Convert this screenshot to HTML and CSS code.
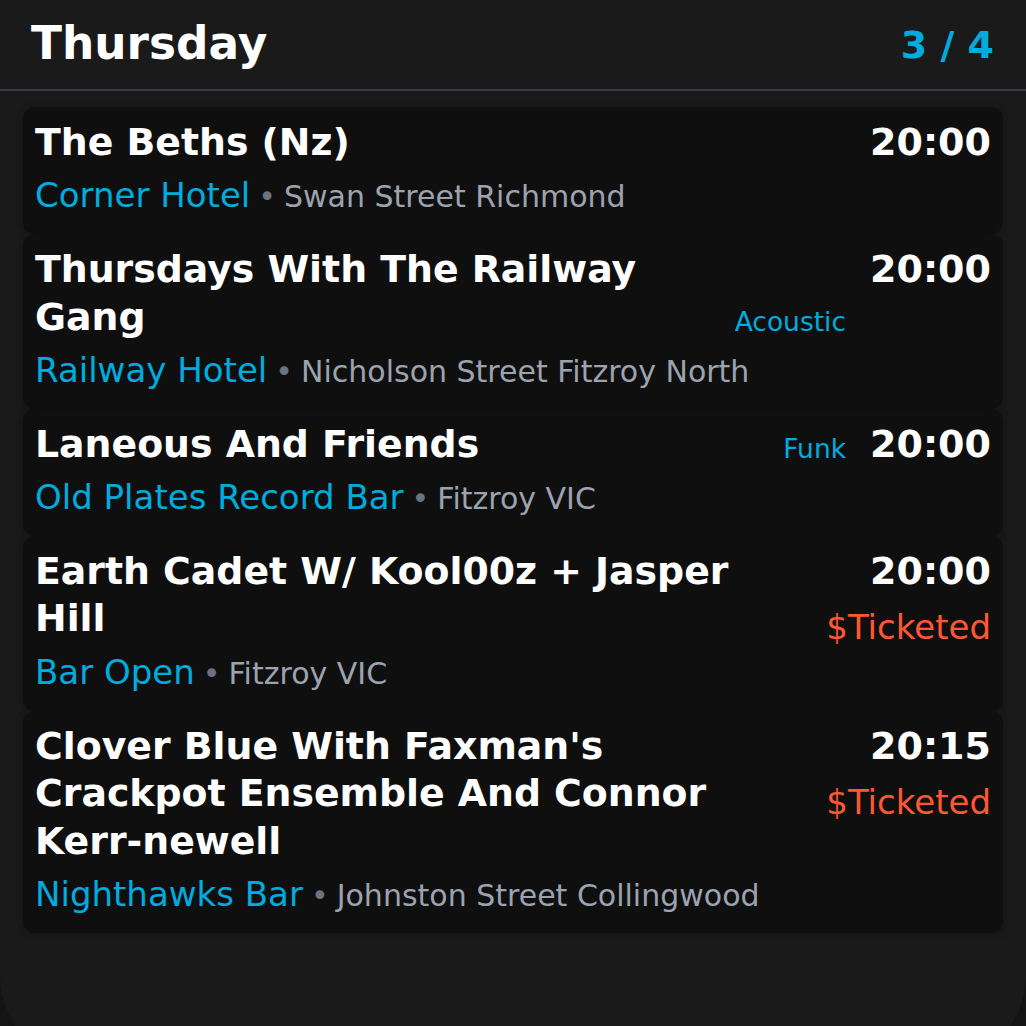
FILE: index.html
```html
<!DOCTYPE html>
<html lang="en">
<head>
<meta charset="utf-8">
<title>Thursday gigs</title>
<link rel="stylesheet" href="styles.css">
</head>
<body>
<div class="screen">
  <header class="header">
    <h1 class="day">Thursday</h1>
    <div class="page">3 / 4</div>
  </header>
  <main class="list">
    <article class="gig">
      <div class="gig-top">
        <h2 class="title">The Beths (Nz)</h2>
        <div class="when"><div class="time">20:00</div></div>
      </div>
      <div class="where"><span class="venue">Corner Hotel</span><span class="dot"> • </span><span class="addr">Swan Street Richmond</span></div>
    </article>
    <article class="gig">
      <div class="gig-top">
        <h2 class="title">Thursdays With The Railway Gang</h2>
        <span class="tag">Acoustic</span>
        <div class="when"><div class="time">20:00</div></div>
      </div>
      <div class="where"><span class="venue">Railway Hotel</span><span class="dot"> • </span><span class="addr">Nicholson Street Fitzroy North</span></div>
    </article>
    <article class="gig">
      <div class="gig-top">
        <h2 class="title">Laneous And Friends</h2>
        <span class="tag">Funk</span>
        <div class="when"><div class="time">20:00</div></div>
      </div>
      <div class="where"><span class="venue">Old Plates Record Bar</span><span class="dot"> • </span><span class="addr">Fitzroy VIC</span></div>
    </article>
    <article class="gig">
      <div class="gig-top">
        <h2 class="title">Earth Cadet W/ Kool00z + Jasper Hill</h2>
        <div class="when"><div class="time">20:00</div><div class="price">$Ticketed</div></div>
      </div>
      <div class="where"><span class="venue">Bar Open</span><span class="dot"> • </span><span class="addr">Fitzroy VIC</span></div>
    </article>
    <article class="gig">
      <div class="gig-top">
        <h2 class="title">Clover Blue With Faxman's Crackpot Ensemble And Connor Kerr-newell</h2>
        <div class="when"><div class="time">20:15</div><div class="price">$Ticketed</div></div>
      </div>
      <div class="where"><span class="venue">Nighthawks Bar</span><span class="dot"> • </span><span class="addr">Johnston Street Collingwood</span></div>
    </article>
  </main>
</div>
</body>
</html>
```

FILE: styles.css
```css
* { box-sizing: border-box; }

html, body {
  margin: 0;
  padding: 0;
  background: #141414;
  overflow: hidden;
}

body {
  font-family: "DejaVu Sans", "Liberation Sans", sans-serif;
  color: #ffffff;
}

.screen {
  width: 1026px;
  height: 1064px;
  background: #1a1a1a;
  border-radius: 0 0 88px 88px;
  overflow: hidden;
}

.header {
  height: 91px;
  display: flex;
  align-items: center;
  justify-content: space-between;
  padding: 0 32px 0 31px;
  border-bottom: 2px solid #363b46;
}

.day {
  margin: 0;
  font-size: 45.4px;
  font-weight: bold;
  line-height: 1.2;
  color: #ffffff;
}

.page {
  font-size: 38px;
  font-weight: bold;
  color: #00acdf;
}

.list {
  padding: 16px 23px 0;
  display: flex;
  flex-direction: column;
}

.gig {
  background: #0f0f0f;
  border-radius: 12px;
  padding: 12px 12px 16px;
  box-shadow: 0 2px 8px rgba(0, 0, 0, 0.25);
}

.gig-top {
  display: flex;
  align-items: flex-start;
  gap: 24px;
}

.title {
  flex: 1;
  margin: 0 24px 0 0;
  font-size: 37.8px;
  line-height: 47.5px;
  font-weight: bold;
  color: #ffffff;
}

.tag {
  align-self: flex-end;
  margin: 0 0 3px -24px;
  font-size: 26.5px;
  line-height: 1.25;
  color: #00acdf;
}

.when {
  display: flex;
  flex-direction: column;
  align-items: flex-end;
}

.time {
  font-size: 38px;
  line-height: 47.5px;
  font-weight: bold;
  color: #ffffff;
}

.price {
  margin-top: 16px;
  font-size: 34px;
  line-height: 32px;
  color: #ff5733;
}

.where {
  margin-top: 5.5px;
  font-size: 34px;
  line-height: 46px;
  white-space: nowrap;
}

.venue {
  color: #00acdf;
}

.dot {
  margin: 0 -1.5px;
  font-size: 30px;
  line-height: 1;
  color: #6b7280;
}

.addr {
  font-size: 30px;
  line-height: 1;
  color: #9ca3af;
}
```
